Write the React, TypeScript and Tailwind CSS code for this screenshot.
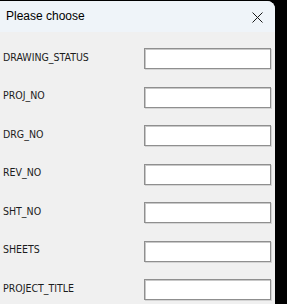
import React from 'react';

const fields = [
    'DRAWING_STATUS',
    'PROJ_NO',
    'DRG_NO',
    'REV_NO',
    'SHT_NO',
    'SHEETS',
    'PROJECT_TITLE',
];

export default function App() {
    return (
        <div className="w-[287px] h-[304px] bg-black pt-px overflow-hidden">
            <div className="w-[275px] h-[303px] bg-[#f0f0f0] rounded-tr-[8px] overflow-hidden flex flex-col">
                <div className="h-[31px] bg-[#eff4f9] flex items-center justify-between pl-[6px] pr-[12px] shrink-0">
                    <span className="text-[12px] text-black mb-[2px] font-['Liberation_Sans',sans-serif]">Please choose</span>
                    <svg width="11" height="11" viewBox="0 0 11 11" className="mt-[1px]">
                        <path d="M0.5 0.5 L10.5 10.5 M10.5 0.5 L0.5 10.5" stroke="#1a1a1a" strokeWidth="1" fill="none" />
                    </svg>
                </div>
                <div className="flex flex-col gap-[17.5px] pt-[16px]">
                    {fields.map((f) => (
                        <div key={f} className="flex items-center h-[21px]">
                            <span className="w-[144px] pl-[3px] mb-[2px] text-[10.5px] text-[#1c1c1c] font-['DejaVu_Sans_Condensed','DejaVu_Sans',sans-serif] font-stretch-condensed">{f}</span>
                            <input
                                type="text"
                                className="w-[127px] h-[21px] bg-white border border-[#8f8f8f] shadow-[inset_1px_1px_0_#c8c8c8,1px_1px_0_#d4d4d4] outline-none"
                            />
                        </div>
                    ))}
                </div>
            </div>
        </div>
    );
}
